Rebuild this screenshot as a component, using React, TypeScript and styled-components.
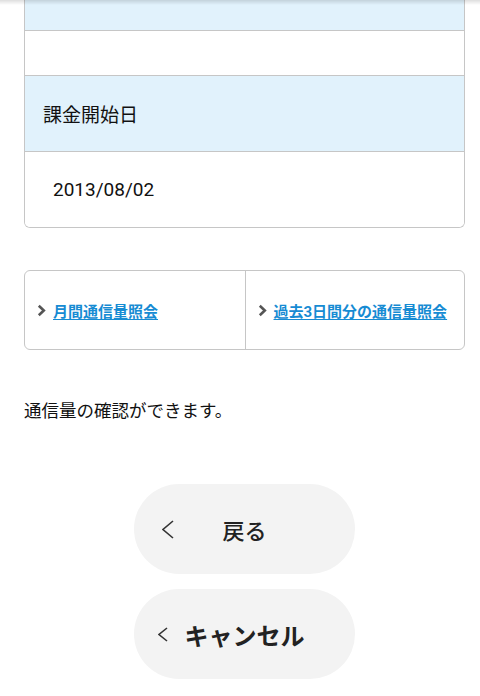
import React from 'react';
import styled, { createGlobalStyle } from 'styled-components';

const GlobalStyle = createGlobalStyle`
  html, body {
    margin: 0;
    padding: 0;
    background: #fff;
    font-family: Roboto, "Noto Sans CJK JP", sans-serif;
    color: #222;
  }
  * { box-sizing: border-box; }
`;

const TopShadow = styled.div`
  position: fixed;
  top: 0;
  left: 0;
  right: 0;
  height: 5px;
  background: linear-gradient(rgba(0, 0, 0, 0.13), rgba(0, 0, 0, 0));
  pointer-events: none;
`;

const Page = styled.main`
  padding: 0 15px 0 24px;
  display: flex;
  flex-direction: column;
`;

const InfoTable = styled.section`
  border: 1px solid #c6c6c6;
  border-top: none;
  border-radius: 0 0 6px 6px;
  overflow: hidden;
`;

const Row = styled.div<{ $head?: boolean; $h: number }>`
  height: ${p => p.$h}px;
  background: ${p => (p.$head ? '#e1f2fc' : '#fff')};
  border-bottom: 1px solid #c6c6c6;
  display: flex;
  align-items: center;
  padding-left: ${p => (p.$head ? 18 : 28)}px;
  font-size: 19px;
  color: #111;
  &:last-child {
    border-bottom: none;
  }
`;

const LinkBox = styled.nav`
  margin-top: 42px;
  height: 80px;
  border: 1px solid #c6c6c6;
  border-radius: 6px;
  display: grid;
  grid-template-columns: 1fr 1fr;
  > div + div {
    border-left: 1px solid #c6c6c6;
  }
`;

const LinkCell = styled.div`
  display: flex;
  align-items: center;
  gap: 7px;
  padding-left: 12px;
  > svg {
    flex-shrink: 0;
  }
  > a {
    color: #168bd3;
    font-size: 15px;
    font-weight: 700;
    text-decoration: underline;
    text-underline-offset: 2px;
    white-space: nowrap;
  }
`;

const Note = styled.p`
  margin: 48px 0 0;
  font-size: 17.5px;
  line-height: 26px;
  color: #111;
`;

const Buttons = styled.div`
  margin-top: 60px;
  display: flex;
  flex-direction: column;
  align-items: center;
  gap: 15px;
`;

const PillButton = styled.button<{ $bold?: boolean; $pad: number }>`
  width: 221px;
  height: 90px;
  border: none;
  border-radius: 45px;
  background: #f3f3f3;
  display: grid;
  grid-template-columns: 1fr auto 1fr;
  align-items: center;
  padding: 0;
  font-family: Roboto, "Noto Sans CJK JP", sans-serif;
  font-size: ${p => (p.$bold ? 24 : 22)}px;
  font-weight: ${p => (p.$bold ? 700 : 500)};
  color: #222;
  > svg {
    justify-self: start;
    margin-left: ${p => p.$pad}px;
  }
`;

const Chevron = () => (
  <svg width="9" height="13" viewBox="0 0 9 13">
    <polyline points="1.8,1.8 6.8,6.5 1.8,11.2" fill="none" stroke="#555" strokeWidth="2.6" />
  </svg>
);

const BackChevron = ({ w, h }: { w: number; h: number }) => (
  <svg width={w} height={h} viewBox={`0 0 ${w} ${h}`}>
    <polyline points={`${w - 1},1 1,${h / 2} ${w - 1},${h - 1}`} fill="none" stroke="#333" strokeWidth="1.6" />
  </svg>
);

export default function App() {
  return (
    <>
      <GlobalStyle />
      <TopShadow />
      <Page>
        <InfoTable>
          <Row $head $h={31} />
          <Row $h={45} />
          <Row $head $h={76}>課金開始日</Row>
          <Row $h={75}>2013/08/02</Row>
        </InfoTable>
        <LinkBox>
          <LinkCell>
            <Chevron />
            <a href="#">月間通信量照会</a>
          </LinkCell>
          <LinkCell>
            <Chevron />
            <a href="#">過去3日間分の通信量照会</a>
          </LinkCell>
        </LinkBox>
        <Note>通信量の確認ができます。</Note>
        <Buttons>
          <PillButton $pad={28}>
            <BackChevron w={12} h={19} />
            <span>戻る</span>
          </PillButton>
          <PillButton $bold $pad={24}>
            <BackChevron w={10} h={15} />
            <span>キャンセル</span>
          </PillButton>
        </Buttons>
      </Page>
    </>
  );
}
